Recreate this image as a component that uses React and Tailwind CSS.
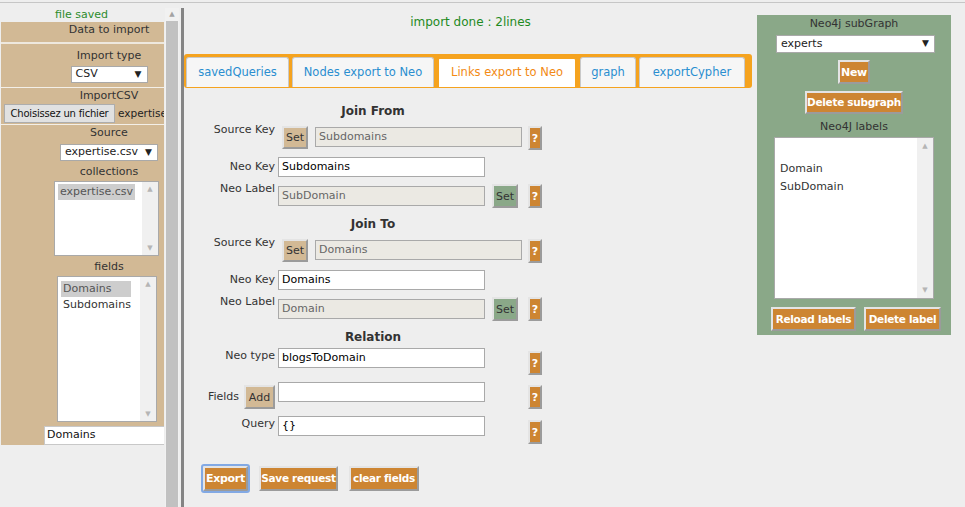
import React from 'react';

const btn3d = "border-2 border-t-[#e4e4e4] border-l-[#e4e4e4] border-r-[#9b9b9b] border-b-[#9b9b9b]";

function OrangeBtn({children, className = ''}) {
	return (
		<button className={`${btn3d} bg-[#cd8532] text-white font-bold text-[10.5px] tracking-[-0.3px] whitespace-nowrap leading-none px-0 flex items-center justify-center ${className}`}>
			{children}
		</button>
	)
}

function Help({className = ''}) {
	return (
		<button className={`${btn3d} bg-[#cd8532] text-white font-bold text-[11px] w-[14px] h-[24px] leading-none p-0 ${className}`}>?</button>
	)
}

function SetBtn({green, className = ''}) {
	return (
		<button className={`${btn3d} ${green ? 'bg-[#8aa888]' : 'bg-[#d2b995]'} text-[#333] text-[11px] w-[26px] leading-none p-0 ${className}`}>Set</button>
	)
}

function Field({value, disabled, className = ''}) {
	return (
		<div className={`border border-[#a9a9a9] h-[20px] px-[3px] flex items-center text-[11px] ${disabled ? 'bg-[#ebe9e3] text-[#666]' : 'bg-white text-black'} ${className}`}>
			{value}
		</div>
	)
}

function Select({value, className = ''}) {
	return (
		<div className={`bg-white border border-[#a9a9a9] flex items-center justify-between pl-[4px] pr-[5px] text-[11px] text-[#222] ${className}`}>
			<span>{value}</span>
			<span className="text-[9px]">▼</span>
		</div>
	)
}

function ListBox({items, selected, className = '', innerClass = ''}) {
	return (
		<div className={`bg-white border border-[#a9a9a9] flex ${className}`}>
			<div className={`flex-1 flex flex-col ${innerClass}`}>
				{items.map((it, i) => (
					<div key={i} className={`h-[16px] leading-[16px] px-[2px] w-fit min-w-[70px] ${it === selected ? 'bg-[#cdcdcd] text-[#555]' : 'text-[#333]'}`}>
						{it}
					</div>
				))}
			</div>
			<div className="w-[16px] bg-[#f0f0f0] flex flex-col justify-between items-center py-[2px] text-[7px] text-[#b5b5b5]">
				<span>▲</span>
				<span>▼</span>
			</div>
		</div>
	)
}

function Label({children, className = ''}) {
	return <div className={`w-[80px] text-right text-[11px] text-[#333] leading-[16px] ${className}`}>{children}</div>
}

function KeyBlock({title, source, neoKey, neoLabel}) {
	return (
		<>
			<div className="w-[356px] text-center font-bold text-[12px] text-[#333] leading-[16px]">{title}</div>
			<div className="flex items-start mt-[3px]">
				<Label>Source Key</Label>
				<SetBtn className="ml-[7px] mt-[4px] h-[23px]" />
				<Field value={source} disabled className="ml-[7px] mt-[5px] w-[207px]" />
				<Help className="ml-[6px] mt-[4px]" />
			</div>
			<div className="flex items-start mt-[7px]">
				<Label className="mt-[2px]">Neo Key</Label>
				<Field value={neoKey} className="ml-[3px] w-[207px]" />
			</div>
			<div className="flex items-start mt-[4px]">
				<Label>Neo Label</Label>
				<Field value={neoLabel} disabled className="ml-[3px] mt-[5px] w-[207px]" />
				<SetBtn green className="ml-[7px] mt-[3px] h-[24px]" />
				<Help className="ml-[10px] mt-[3px]" />
			</div>
		</>
	)
}

export default function App() {
	const tabs = [
		{name: 'savedQueries', w: 'w-[103px]'},
		{name: 'Nodes export to Neo', w: 'w-[142px]'},
		{name: 'Links export to Neo', w: 'w-[140px]', active: true},
		{name: 'graph', w: 'w-[56px]'},
		{name: 'exportCypher', w: 'w-[106px]'},
	];

	return (
		<div className="w-[965px] h-[507px] bg-[#eeeeee] overflow-hidden font-['DejaVu_Sans',sans-serif] text-[11px]">
			<div className="h-[2px]" />
			<div className="h-[1px] bg-[#c6c6c6]" />
			<div className="h-[5px]" />

			<div className="flex h-[499px]">
				{/* left import panel */}
				<div className="w-[165px] overflow-hidden">
					<div className="w-[163px] text-center text-[#2c8c2c] leading-[14px]">file saved</div>
					<div className="w-[163px] ml-[1px] overflow-hidden bg-[#d2b995]">
						<div className="w-[216px] flex flex-col items-center text-[#333]">
							<div className="leading-[16px]">Data to import</div>
							<div className="w-full h-[2px] mt-[4px] bg-[#eee8de]" />
							<div className="leading-[16px] mt-[4px]">Import type</div>
							<Select value="CSV" className="w-[77px] h-[17px] mt-[2px]" />
							<div className="w-full h-[1px] mt-[4px] bg-[#f3efe8]" />
							<div className="leading-[16px]">ImportCSV</div>
							<div className="self-start flex items-center whitespace-nowrap">
								<button className="ml-[3px] h-[19px] w-[111px] border border-[#adadad] bg-[#e1e1e1] text-[10px] tracking-[-0.2px] text-[#111] leading-none px-0">Choisissez un fichier</button>
								<span className="ml-[3px] text-[10.5px] text-[#222]">expertise.</span>
							</div>
							<div className="w-full h-[1px] mt-[1px] bg-[#f3efe8]" />
							<div className="leading-[16px]">Source</div>
							<Select value="expertise.csv" className="w-[98px] h-[17px] mt-[3px]" />
							<div className="leading-[16px] mt-[3px]">collections</div>
							<ListBox items={['expertise.csv']} selected="expertise.csv" className="w-[105px] h-[75px] mt-[1px] -ml-[5px]" innerClass="pt-[2px] pl-[3px]" />
							<div className="leading-[16px] mt-[3px]">fields</div>
							<ListBox items={['Domains', 'Subdomains']} selected="Domains" className="w-[100px] h-[146px] mt-[1px] -ml-[4px]" innerClass="pt-[4px] pl-[3px]" />
							<div className="self-start ml-[43px] mt-[4px] w-[173px] h-[19px] bg-white border border-[#c8c8c8] px-[2px] flex items-center text-[#111]">Domains</div>
						</div>
					</div>
				</div>

				{/* fake scrollbar */}
				<div className="w-[14px] flex flex-col bg-[#f1f1f1]">
					<div className="h-[13px] flex items-center justify-center text-[7px] text-[#a3a3a3]">▲</div>
					<div className="flex-1 mx-[1px] bg-[#c1c1c1]" />
				</div>
				<div className="w-[2px]" />
				<div className="w-[3px] bg-[#848484]" />

				{/* main */}
				<div className="w-[573px] flex flex-col">
					<div className="mt-[6px] text-center text-[12px] leading-[16px] text-[#1e8a1e]">import done : 2lines</div>

					<div className="mt-[24px] w-[568px] h-[34px] bg-[#f5a31f] rounded-[3px] flex items-start gap-[3px] pt-[3px] pl-[2px]">
						{tabs.map((t) => (
							<div key={t.name}
							className={`${t.w} h-[30px] flex items-center justify-center rounded-t-[3px] text-[11.5px] ${t.active ? 'bg-white text-[#f28a14] border-2 border-b-0 border-[#f5a31f]' : 'bg-[#f6f6f6] text-[#2a8ed0] border border-b-0 border-[#c9c9c9]'}`}>
								{t.name}
							</div>
						))}
					</div>

					<div className="ml-[11px] mt-[15px] flex flex-col">
						<KeyBlock title="Join From" source="Subdomains" neoKey="Subdomains" neoLabel="SubDomain" />
						<div className="h-[8px]" />
						<KeyBlock title="Join To" source="Domains" neoKey="Domains" neoLabel="Domain" />

						<div className="mt-[8px] w-[356px] text-center font-bold text-[12px] text-[#333] leading-[16px]">Relation</div>
						<div className="flex items-start mt-[3px]">
							<Label>Neo type</Label>
							<Field value="blogsToDomain" className="ml-[3px] w-[207px]" />
							<Help className="ml-[43px] mt-[3px]" />
						</div>
						<div className="flex items-start mt-[7px]">
							<div className="w-[80px] flex justify-end items-start">
								<span className="text-[11px] text-[#333] leading-[16px] mt-[7px]">Fields</span>
								<button className={`${btn3d} ml-[5px] mt-[3px] w-[31px] h-[24px] bg-[#d2b995] text-[#333] text-[11px] leading-none p-0`}>Add</button>
							</div>
							<Field value="" className="ml-[3px] w-[207px]" />
							<Help className="ml-[43px] mt-[3px]" />
						</div>
						<div className="flex items-start mt-[7px]">
							<Label>Query</Label>
							<Field value="{}" className="ml-[3px] w-[207px]" />
							<Help className="ml-[43px] mt-[4px]" />
						</div>

						<div className="flex items-center mt-[22px] ml-[8px] gap-[11px]">
							<OrangeBtn className="h-[25px] w-[45px] text-[11px] outline-2 outline-[#82a9e4] rounded-[1px]">Export</OrangeBtn>
							<OrangeBtn className="h-[25px] w-[79px]">Save request</OrangeBtn>
							<OrangeBtn className="h-[25px] w-[70px]">clear fields</OrangeBtn>
						</div>
					</div>
				</div>

				{/* neo4j side panel */}
				<div className="w-[194px] h-[320px] mt-[7px] bg-[#8aa888] flex flex-col items-center text-[#333]">
					<div className="mt-[1px] leading-[16px]">Neo4j subGraph</div>
					<Select value="experts" className="w-[159px] h-[18px] mt-[3px] ml-[3px]" />
					<OrangeBtn className="mt-[7px] h-[24px] w-[32px] text-[11px]">New</OrangeBtn>
					<OrangeBtn className="mt-[7px] h-[23px] w-[98px]">Delete subgraph</OrangeBtn>
					<div className="mt-[5px] leading-[16px]">Neo4J labels</div>
					<div className="mt-[2px] w-[160px] h-[162px] bg-white border border-[#a9a9a9] flex">
						<div className="flex-1 flex flex-col pt-[4px] pl-[5px] text-[#333]">
							<div className="h-[18px]" />
							<div className="h-[18px] leading-[18px]">Domain</div>
							<div className="h-[18px] leading-[18px]">SubDomain</div>
						</div>
						<div className="w-[16px] bg-[#f0f0f0] flex flex-col justify-between items-center py-[3px] text-[7px] text-[#b5b5b5]">
							<span>▲</span>
							<span>▼</span>
						</div>
					</div>
					<div className="mt-[8px] flex gap-[8px] self-start ml-[14px]">
						<OrangeBtn className="h-[24px] w-[85px]">Reload labels</OrangeBtn>
						<OrangeBtn className="h-[24px] w-[77px]">Delete label</OrangeBtn>
					</div>
				</div>
			</div>
		</div>
	)
}
